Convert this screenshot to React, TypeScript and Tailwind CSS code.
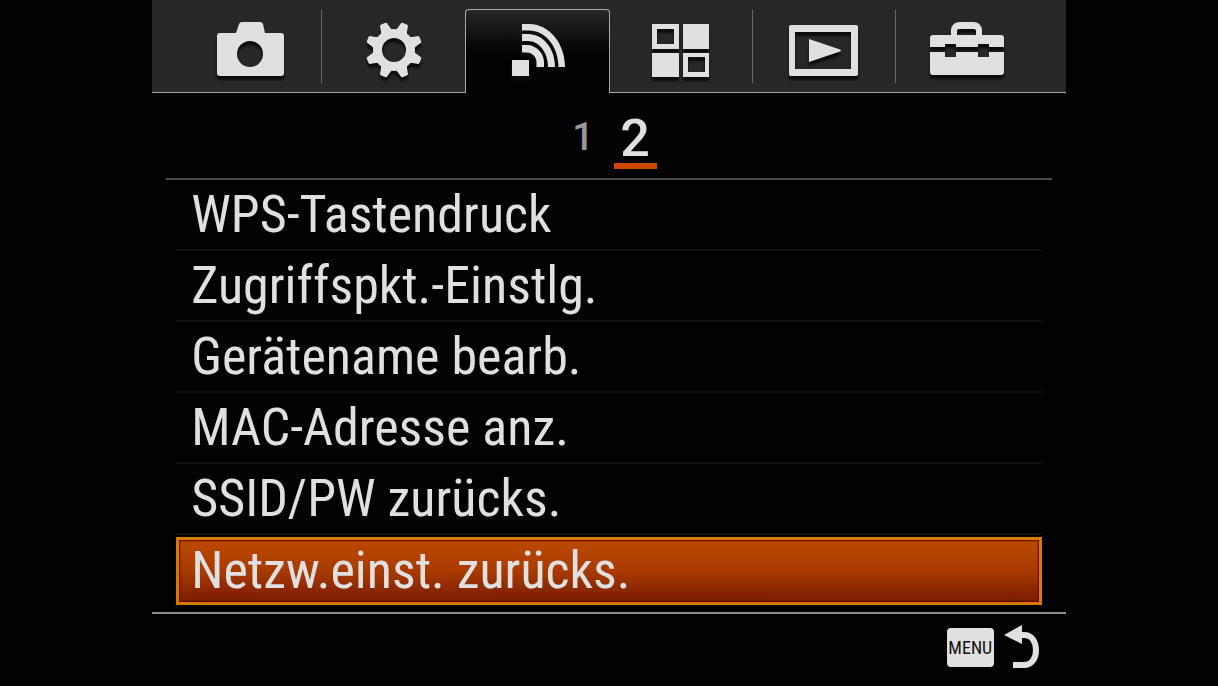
import { useState } from "react";
import type { ReactNode } from "react";
import clsx from "clsx";

const gearAngles = [22.5, 67.5, 112.5, 157.5, 202.5, 247.5, 292.5, 337.5];

function Icon({ children }: { children: ReactNode }) {
  return (
    <svg
      viewBox="0 0 80 60"
      className="w-20 h-[60px] shrink-0 overflow-visible fill-[#e0e0e0] drop-shadow-[0_4px_1px_#0c0c0c]"
      aria-hidden="true"
    >
      {children}
    </svg>
  );
}

const tabs = [
  {
    id: "camera",
    label: "Kamera",
    divider: true,
    icon: (
      <path
        fillRule="evenodd"
        d="M10 14H26L29 5Q30 3 32 3H50Q52 3 53 5L55 14H71Q74 14 74 17V54Q74 57 71 57H10Q7 57 7 54V17Q7 14 10 14ZM53 35a13 13 0 1 0-26 0a13 13 0 1 0 26 0Z"
      />
    ),
  },
  {
    id: "custom",
    label: "Benutzereinstellungen",
    divider: false,
    icon: (
      <g transform="translate(40 31)">
        <circle r="16.5" fill="none" stroke="#e0e0e0" strokeWidth="9" />
        {gearAngles.map((angle) => (
          <path
            key={angle}
            transform={`rotate(${angle})`}
            d="M-2-28.500H2Q4-28.500 4-26.500L5-22L6.500-18H-6.500L-5-22L-4-26.500Q-4-28.500-2-28.500Z"
          />
        ))}
      </g>
    ),
  },
  {
    id: "wireless",
    label: "Drahtlos",
    divider: false,
    icon: (
      <>
        <rect x="14" y="41" width="17" height="16" />
        <path d="M24 5H31C51 5 67 24 67 48H60.500C60.500 27 47 11.500 31 11.500H24Z" />
        <path d="M24 15H30C45 15 57 29 57 48H50C50 33 41 22 30 22H24Z" />
        <path d="M24 26H29C38 26 46 34 46 43V48H38.500V43C38.500 38 34 33.500 29 33.500H24Z" />
      </>
    ),
  },
  {
    id: "apps",
    label: "Applikationen",
    divider: true,
    icon: (
      <>
        <path fillRule="evenodd" d="M11 5H38V30H11ZM16 10V25H33V10Z" />
        <rect x="42" y="5" width="26" height="25" />
        <rect x="11" y="34" width="27" height="24" />
        <path fillRule="evenodd" d="M42 34H68V58H42ZM47 38V53H64V38Z" />
      </>
    ),
  },
  {
    id: "playback",
    label: "Wiedergabe",
    divider: true,
    icon: (
      <>
        <path
          fillRule="evenodd"
          d="M7 6H72Q74 6 74 8V55Q74 57 72 57H7Q5 57 5 55V8Q5 6 7 6ZM11 13V50H67V13Z"
        />
        <path d="M25 20L56 30.500Q58 31.500 56 32.500L25 43Z" />
      </>
    ),
  },
  {
    id: "setup",
    label: "Setup",
    divider: false,
    icon: (
      <>
        <path
          fillRule="evenodd"
          d="M3 28V19Q3 16 6 16H24V11Q25 3 33 3H46Q54 3 55 11V16H74Q77 16 77 19V28H62V25H51V28H29V25H18V28ZM30 16H49V12Q49 10 47 10H32Q30 10 30 12Z"
        />
        <path d="M3 33H18V38H29V33H51V38H62V33H77V53Q77 56 74 56H6Q3 56 3 53Z" />
      </>
    ),
  },
];

const pages = [1, 2];

const items = [
  "WPS-Tastendruck",
  "Zugriffspkt.-Einstlg.",
  "Gerätename bearb.",
  "MAC-Adresse anz.",
  "SSID/PW zurücks.",
  "Netzw.einst. zurücks.",
];

export default function App() {
  const [activeTab, setActiveTab] = useState("wireless");
  const [page, setPage] = useState(2);
  const [selected, setSelected] = useState(5);

  return (
    <div className="min-h-screen bg-[#020202] text-[#e0e0e0] font-['Roboto_Condensed','Liberation_Sans',sans-serif]">
      <div className="w-3/4 mx-auto">

        {/* TABS */}
        <nav className="flex bg-[#272727]">
          <div className="w-[27px] border-b border-[#a8a8a8]" />
          {tabs.map((tab) => {
            const active = tab.id === activeTab;
            return (
              <button
                key={tab.id}
                type="button"
                aria-label={tab.label}
                onClick={() => setActiveTab(tab.id)}
                className={clsx(
                  "flex flex-1 items-start",
                  active
                    ? "mt-[9px] h-[84px] pt-[9px] border-x border-t rounded-t border-[#a8a8a8] bg-linear-to-b from-[#272727] to-[#020202] to-60%"
                    : "h-[93px] pt-[10px] border-b border-[#a8a8a8]"
                )}
              >
                <span className={clsx("flex flex-1 justify-center", !active && "pt-[9px]")}>
                  <Icon>{tab.icon}</Icon>
                </span>
                {tab.divider && <span className="w-px h-[73px] bg-[#686868]" />}
              </button>
            );
          })}
          <div className="w-[27px] border-b border-[#a8a8a8]" />
        </nav>

        {/* PAGES */}
        <div className="mx-[14px] h-[87px] flex items-end justify-center gap-[9px] pb-[9px] border-b-2 border-[#4c4c4c]">
          {pages.map((n) => (
            <button
              key={n}
              type="button"
              onClick={() => setPage(n)}
              className={clsx(
                "w-[43px] border-b-[6px] text-center font-medium font-['Roboto','Liberation_Sans',sans-serif]",
                n === page
                  ? "border-[#d04800] text-[52px] leading-[48px]"
                  : "border-transparent text-[38px] leading-[52px] text-[#999999]"
              )}
            >
              {n}
            </button>
          ))}
        </div>

        {/* MENU ITEMS */}
        <ul className="mx-6 mb-[7px]">
          {items.map((item, idx) => (
            <li key={item}>
              <button
                type="button"
                onClick={() => setSelected(idx)}
                className={clsx(
                  "w-full text-left whitespace-nowrap text-[52px]",
                  idx === selected
                    ? "mt-[2px] h-[68px] pl-3 leading-[62px] border-[3px] border-[#d97800] bg-linear-to-b from-[#bb4a00] via-[#a83a00] to-[#7a1c00] inset-shadow-[0_0_2px_1px_#5c0a00]"
                    : "h-[71px] pl-[15px] leading-[70px] border-b-2 border-[#101010]"
                )}
              >
                {item}
              </button>
            </li>
          ))}
        </ul>

        {/* FOOTER */}
        <footer className="border-t-2 border-[#8c8c8c] pt-[9px] pr-6 flex justify-end">
          <button type="button" aria-label="MENU zurück" className="flex items-center gap-2">
            <span className="w-[47px] h-[39px] rounded bg-[#e0e0e0] text-[#111111] text-[18px] leading-[39px] text-center">
              MENU
            </span>
            <svg viewBox="0 0 40 48" className="w-10 h-12" aria-hidden="true">
              <path d="M2 12L20 2V21Z" fill="#e0e0e0" />
              <path
                d="M18 12H22C30 12 34 19 34 27S30 42 22 42H11"
                fill="none"
                stroke="#e0e0e0"
                strokeWidth="6"
              />
            </svg>
          </button>
        </footer>

      </div>
    </div>
  );
}
